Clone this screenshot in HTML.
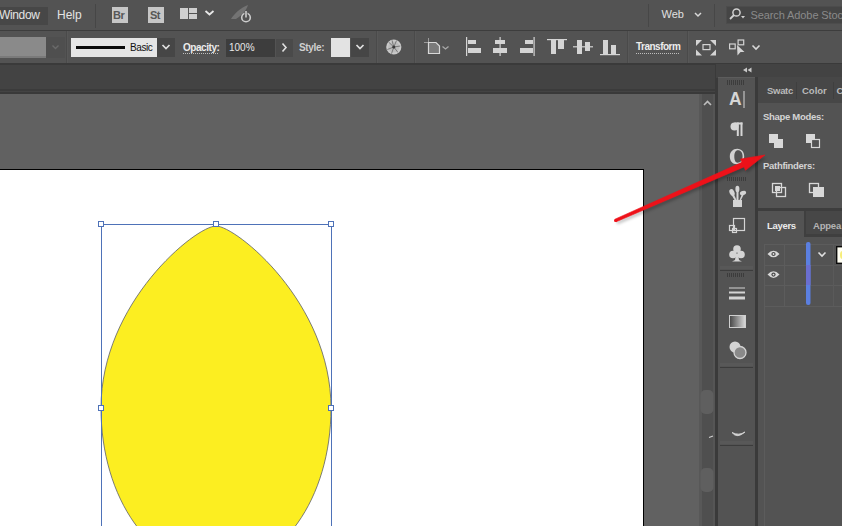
<!DOCTYPE html>
<html><head><meta charset="utf-8">
<style>
*{margin:0;padding:0;box-sizing:border-box}
html,body{width:842px;height:526px;overflow:hidden;background:#535353;font-family:"Liberation Sans",sans-serif;}
.a{position:absolute}
.t{position:absolute;white-space:nowrap;color:#e6e6e6;font-size:12px;line-height:14px}
.b{font-weight:bold;font-size:11px}
.sep{position:absolute;width:1px;background:#464646}
</style></head><body>

<!-- MENU BAR -->
<div class="a" style="left:0;top:0;width:842px;height:30px;background:#535353"></div>
<div class="a" style="left:0;top:30px;width:842px;height:1px;background:#3d3d3d"></div>
<div class="a" style="left:0;top:7px;width:48px;height:18px;background:#474747"></div>
<div class="t" style="left:-1px;top:7.5px;font-size:12px;letter-spacing:-0.35px;color:#e4e4e4">Window</div>
<div class="t" style="left:57px;top:7.5px;font-size:12px;color:#e4e4e4">Help</div>
<div class="sep" style="left:95px;top:4px;height:24px"></div>
<div class="a" style="left:112px;top:7px;width:16px;height:16px;background:#c6c6c6"></div>
<div class="t" style="left:113px;top:8px;font-size:11px;font-weight:bold;color:#575757;letter-spacing:-0.5px">Br</div>
<div class="a" style="left:148px;top:7px;width:16px;height:16px;background:#c6c6c6"></div>
<div class="t" style="left:150px;top:8px;font-size:11px;font-weight:bold;color:#575757;letter-spacing:-0.5px">St</div>

<svg class="a" style="left:0;top:0" width="842" height="31" viewBox="0 0 842 31">
  <rect x="180" y="8" width="8" height="11" fill="#cfcfcf"/>
  <rect x="189" y="8" width="8" height="5" fill="#cfcfcf"/>
  <rect x="189" y="14" width="8" height="5" fill="#cfcfcf"/>
  <path d="M205.5,11 L209.5,14.5 L213.5,11" fill="none" stroke="#e8e8e8" stroke-width="1.8"/>
  <path d="M231,19 C234,14 240,8 248,5 C246,11 242,15 236,19 Z" fill="#7c7c7c" opacity="0.8"/>
  <circle cx="246" cy="17.5" r="4.3" fill="none" stroke="#cdcdcd" stroke-width="1.6"/>
  <rect x="244.5" y="12" width="3" height="5" fill="#535353"/>
  <rect x="245.2" y="11" width="1.6" height="6.5" fill="#cdcdcd"/>
  <rect x="648" y="4" width="1" height="23" fill="#474747"/>
  <path d="M695,13 L698,16 L701,13" fill="none" stroke="#d8d8d8" stroke-width="1.5"/>
  <rect x="714" y="4" width="1" height="23" fill="#474747"/>
  <rect x="726.5" y="6.5" width="120" height="17" fill="#454545" stroke="#4c4c4c" stroke-width="1"/>
  <circle cx="736.5" cy="12.5" r="3.6" fill="none" stroke="#d0d0d0" stroke-width="1.5"/>
  <path d="M734,15 L730,19" stroke="#d0d0d0" stroke-width="1.8"/>
  <path d="M741,16 L745,16 L743,18.5 Z" fill="#d0d0d0"/>
</svg>
<div class="t" style="left:661.5px;top:7.2px;font-size:11px;color:#e0e0e0">Web</div>
<div class="t" style="left:750.5px;top:7.5px;font-size:11px;letter-spacing:-0.1px;color:#8a8a8a">Search Adobe Stock</div>

<!-- CONTROL BAR -->
<div class="a" style="left:0;top:31px;width:842px;height:32px;background:#535353"></div>
<div class="a" style="left:0;top:63px;width:842px;height:1px;background:#3b3b3b"></div>

<svg class="a" style="left:0;top:31px" width="842" height="32" viewBox="0 31 842 32">
  <rect x="0" y="37" width="46" height="21" fill="#8a8a8a"/>
  <rect x="0" y="56" width="46" height="2" fill="#7a7a7a"/>
  <rect x="46" y="37" width="19" height="21" fill="#4f4f4f"/>
  <path d="M52.5,45.5 L55.5,48.5 L58.5,45.5" fill="none" stroke="#6a6a6a" stroke-width="1.4"/>
  <rect x="66" y="31" width="1" height="32" fill="#4a4a4a"/><rect x="67" y="31" width="1" height="32" fill="#585858"/>
  <rect x="71" y="38" width="86" height="19" fill="#e5e5e5"/>
  <rect x="76" y="46" width="49" height="3" fill="#0a0a0a"/>
  <rect x="157" y="38" width="18" height="19" fill="#464646"/>
  <path d="M162.5,45 L166,48.5 L169.5,45" fill="none" stroke="#e0e0e0" stroke-width="1.7"/>
  <line x1="183" y1="53.5" x2="219" y2="53.5" stroke="#bdbdbd" stroke-width="1" stroke-dasharray="1,1"/>
  <rect x="226" y="39" width="49" height="18" fill="#3d3d3d"/>
  <rect x="276" y="39" width="17" height="18" fill="#4a4a4a"/>
  <path d="M282.5,43.5 L286,47.5 L282.5,51.5" fill="none" stroke="#e0e0e0" stroke-width="1.6"/>
  <rect x="331" y="38" width="19" height="19" fill="#e3e3e3"/>
  <rect x="351" y="38" width="18" height="19" fill="#464646"/>
  <path d="M356.5,45 L360,48.5 L363.5,45" fill="none" stroke="#e0e0e0" stroke-width="1.7"/>
  <rect x="376" y="31" width="1" height="32" fill="#4a4a4a"/><rect x="377" y="31" width="1" height="32" fill="#585858"/>
  <circle cx="393.8" cy="47" r="7.6" fill="#cacaca"/>
  <circle cx="393.8" cy="47" r="5.6" fill="#bdbdbd"/>
  <g stroke="#7a7a7a" stroke-width="1">
   <line x1="393.8" y1="47" x2="396.5" y2="40.5"/><line x1="393.8" y1="47" x2="400.3" y2="46"/>
   <line x1="393.8" y1="47" x2="398" y2="52.5"/><line x1="393.8" y1="47" x2="391.5" y2="53.7"/>
   <line x1="393.8" y1="47" x2="387.3" y2="49.5"/><line x1="393.8" y1="47" x2="388.5" y2="42"/>
   <line x1="393.8" y1="47" x2="392" y2="40.3"/>
  </g>
  <circle cx="393.8" cy="47" r="1.6" fill="#3a3a3a"/>
  <rect x="414" y="31" width="1" height="32" fill="#4a4a4a"/><rect x="415" y="31" width="1" height="32" fill="#585858"/>
  <path d="M428.5,42.5 L436,42.5 L439.5,46 L439.5,53.5 L428.5,53.5 Z" fill="#7a7a7a" stroke="#d8d8d8" stroke-width="1.2"/>
  <line x1="428.5" y1="38" x2="428.5" y2="42" stroke="#9a9a9a" stroke-width="1"/>
  <line x1="424" y1="42.5" x2="428" y2="42.5" stroke="#9a9a9a" stroke-width="1"/>
  <path d="M442.5,46.5 L445.5,49 L448.5,46.5" fill="none" stroke="#a8a8a8" stroke-width="1.3"/>
  <g fill="#d4d4d4">
   <rect x="466" y="37" width="1.2" height="19"/>
   <rect x="468" y="40" width="8" height="4"/><rect x="468" y="48" width="13" height="5"/>
   <rect x="499.5" y="37" width="1.2" height="19"/>
   <rect x="495" y="40" width="10" height="4"/><rect x="493" y="48" width="14" height="5"/>
   <rect x="533.5" y="37" width="1.2" height="19"/>
   <rect x="525" y="40" width="8" height="4"/><rect x="520" y="48" width="13" height="5"/>
   <rect x="547" y="39" width="20" height="1.2"/>
   <rect x="551" y="40" width="5" height="14"/><rect x="558" y="40" width="6" height="9"/>
   <rect x="573" y="46.2" width="20" height="1.2"/>
   <rect x="577" y="40" width="5" height="14"/><rect x="585" y="42" width="5" height="9"/>
   <rect x="600" y="54" width="20" height="1.2"/>
   <rect x="603" y="40" width="5" height="14"/><rect x="611" y="45" width="5" height="9"/>
  </g>
  <rect x="627" y="31" width="1" height="32" fill="#4a4a4a"/><rect x="628" y="31" width="1" height="32" fill="#585858"/>
  <line x1="636" y1="53.5" x2="680" y2="53.5" stroke="#bdbdbd" stroke-width="1" stroke-dasharray="1,1"/>
  <rect x="687" y="31" width="1" height="32" fill="#4a4a4a"/><rect x="688" y="31" width="1" height="32" fill="#585858"/>
  <g fill="#d4d4d4">
   <path d="M696,40 L702,40 L696,46 Z"/><path d="M716,40 L710,40 L716,46 Z"/>
   <path d="M696,55.5 L702,55.5 L696,49.5 Z"/><path d="M716,55.5 L710,55.5 L716,49.5 Z"/>
   <path d="M737,45 L744.5,52 L740.5,52 L737.5,55.5 Z"/>
  </g>
  <g fill="none" stroke="#d4d4d4" stroke-width="1.2">
   <rect x="703" y="44.6" width="7" height="5"/>
   <rect x="729.6" y="44" width="5.6" height="4.8"/>
   <rect x="738.1" y="40" width="5.6" height="4.8"/>
  </g>
  <path d="M752.5,45.5 L756,49 L759.5,45.5" fill="none" stroke="#d8d8d8" stroke-width="1.6"/>
</svg>
<div class="t" style="left:130px;top:41.2px;font-size:10px;letter-spacing:-0.4px;color:#111">Basic</div>
<div class="t" style="left:183px;top:40.5px;font-size:10px;font-weight:bold;letter-spacing:-0.45px;color:#ececec">Opacity:</div>
<div class="t" style="left:229px;top:40.5px;font-size:10px;color:#e8e8e8">100%</div>
<div class="t" style="left:299px;top:40.5px;font-size:10px;font-weight:bold;letter-spacing:-0.35px;color:#cfcfcf">Style:</div>
<div class="t" style="left:636px;top:40.3px;font-size:10px;font-weight:bold;letter-spacing:-0.5px;color:#ececec">Transform</div>

<!-- DOC STRIP -->
<div class="a" style="left:0;top:64px;width:716px;height:30px;background:#434343"></div>
<div class="a" style="left:0;top:63px;width:842px;height:2px;background:#3a3a3a"></div>
<div class="a" style="left:0;top:89px;width:716px;height:2px;background:#3b3b3b"></div>
<div class="a" style="left:0;top:92px;width:716px;height:2px;background:#393939"></div>

<!-- CANVAS -->
<div class="a" style="left:0;top:94px;width:700px;height:432px;background:#616161"></div>
<svg class="a" style="left:0;top:0" width="700" height="526" viewBox="0 0 700 526">
  <rect x="-1" y="169.5" width="644.5" height="400" fill="#fff" stroke="#000" stroke-width="1"/>
  <path d="M216,226 C236,226 331,302.4 331,408 C331,498.7 280.4,570 216,570 C151.6,570 101,498.7 101,408 C101,302.4 196,226 216,226 Z" fill="#fcee21" stroke="#5c5e6a" stroke-width="0.8"/>
  <rect x="101.5" y="224.5" width="230" height="400" fill="none" stroke="#4e72b8" stroke-width="1"/>
  <rect x="98.5" y="221.5" width="5" height="5" fill="#fff" stroke="#4e72b8" stroke-width="1"/>
  <rect x="213.5" y="221.5" width="5" height="5" fill="#fff" stroke="#4e72b8" stroke-width="1"/>
  <rect x="328.5" y="221.5" width="5" height="5" fill="#fff" stroke="#4e72b8" stroke-width="1"/>
  <rect x="98.5" y="405.5" width="5" height="5" fill="#fff" stroke="#4e72b8" stroke-width="1"/>
  <rect x="328.5" y="405.5" width="5" height="5" fill="#fff" stroke="#4e72b8" stroke-width="1"/>
</svg>

<!-- SCROLLBAR -->
<div class="a" style="left:699px;top:94px;width:3px;height:432px;background:#585858"></div>
<div class="a" style="left:702px;top:94px;width:11px;height:432px;background:#4f4f4f"></div>
<div class="a" style="left:713px;top:94px;width:2px;height:432px;background:#555555"></div>
<div class="a" style="left:715px;top:64px;width:3px;height:462px;background:#3a3a3a"></div>

<!-- RIGHT DOCK -->
<div class="a" style="left:716px;top:64px;width:126px;height:14px;background:#434343"></div>
<div class="a" style="left:718px;top:77px;width:37px;height:449px;background:#535353"></div>
<div class="a" style="left:718px;top:77px;width:37px;height:1px;background:#5c5c5c"></div>
<div class="a" style="left:755px;top:77px;width:3px;height:449px;background:#3a3a3a"></div>
<div class="a" style="left:758px;top:77px;width:84px;height:26px;background:#474747"></div>
<div class="a" style="left:758px;top:103px;width:84px;height:104px;background:#535353"></div>
<div class="a" style="left:758px;top:208px;width:84px;height:3px;background:#3d3d3d"></div>
<div class="a" style="left:758px;top:211px;width:84px;height:26px;background:#474747"></div>
<div class="a" style="left:758px;top:211px;width:46px;height:26px;background:#535353"></div>
<div class="a" style="left:758px;top:237px;width:84px;height:289px;background:#535353"></div>
<svg class="a" style="left:700px;top:64px" width="142" height="462" viewBox="700 64 142 462">
  <path d="M743,70 L747,67.5 L747,72.5 Z M747.5,70 L751.5,67.5 L751.5,72.5 Z" fill="#c8c8c8"/>
  <!-- scrollbar -->
  <path d="M704,105 L707.5,101.5 L711,105" fill="none" stroke="#bdbdbd" stroke-width="1.6"/>
  <rect x="700.5" y="390" width="13" height="24" rx="5" fill="#5f5f5f"/>
  <rect x="700.5" y="468" width="13" height="24" rx="5" fill="#5f5f5f"/>
  <path d="M709,437.5 L713,436" stroke="#d0d0d0" stroke-width="1.2"/>
  <!-- grips -->
  <g fill="#3c3c3c">
   <rect x="727" y="80" width="1" height="5"/><rect x="729" y="80" width="1" height="5"/><rect x="731" y="80" width="1" height="5"/><rect x="733" y="80" width="1" height="5"/><rect x="735" y="80" width="1" height="5"/><rect x="737" y="80" width="1" height="5"/><rect x="739" y="80" width="1" height="5"/><rect x="741" y="80" width="1" height="5"/><rect x="743" y="80" width="1" height="5"/>
   <rect x="727" y="177" width="1" height="4"/><rect x="729" y="177" width="1" height="4"/><rect x="731" y="177" width="1" height="4"/><rect x="733" y="177" width="1" height="4"/><rect x="735" y="177" width="1" height="4"/><rect x="737" y="177" width="1" height="4"/><rect x="739" y="177" width="1" height="4"/><rect x="741" y="177" width="1" height="4"/><rect x="743" y="177" width="1" height="4"/><rect x="745" y="177" width="1" height="4"/>
   <rect x="727" y="273" width="1" height="4"/><rect x="729" y="273" width="1" height="4"/><rect x="731" y="273" width="1" height="4"/><rect x="733" y="273" width="1" height="4"/><rect x="735" y="273" width="1" height="4"/><rect x="737" y="273" width="1" height="4"/><rect x="739" y="273" width="1" height="4"/><rect x="741" y="273" width="1" height="4"/><rect x="743" y="273" width="1" height="4"/>
  </g>
  <rect x="720" y="266" width="33" height="3" fill="#585858"/><rect x="720" y="270" width="33" height="1" fill="#3c3c3c"/>
  <rect x="720" y="363" width="33" height="3" fill="#585858"/><rect x="720" y="367" width="33" height="1" fill="#3c3c3c"/>
  <rect x="720" y="441" width="33" height="3" fill="#585858"/><rect x="720" y="445" width="33" height="1" fill="#3c3c3c"/>
  <rect x="743.5" y="91" width="1" height="17" fill="#d8d8d8"/>
  <g fill="#d6d6d6"><circle cx="734.5" cy="126.5" r="4"/><rect x="734.5" y="122.5" width="8" height="2"/><rect x="736.8" y="122.5" width="2" height="13.5"/><rect x="740.5" y="122.5" width="2" height="13.5"/></g>
  <path fill-rule="evenodd" fill="#d2d2d2" d="M737.2,148.8 C742,148.8 744.2,152.5 744.2,156.5 C744.2,161 741,164.2 736.8,164.2 C732.5,164.2 729.8,161 729.8,156.5 C729.8,152 733,148.8 737.2,148.8 Z M738,150.3 C735.5,150.3 734.3,153 734.3,156.5 C734.3,160 735.5,162.7 737.5,162.7 C740.5,162.7 742.6,160 742.6,156.5 C742.6,152.8 740.8,150.3 738,150.3 Z"/>
  <!-- brushes -->
  <g fill="#d4d4d4">
   <rect x="733" y="200" width="9" height="7"/>
   <path d="M734.5,200 L731,194 L733,192.5 L736.5,200 Z"/>
   <path d="M736.5,200 L736.5,191 L738.5,191 L738.5,200 Z"/>
   <path d="M739.5,200 L742,194 L743.5,195 L741,200 Z"/>
   <ellipse cx="732" cy="192.5" rx="2.4" ry="3.6" transform="rotate(-25 732 192.5)"/>
   <ellipse cx="737.4" cy="189" rx="2" ry="3.2"/>
   <ellipse cx="743" cy="193" rx="3.2" ry="2" transform="rotate(-20 743 193)"/>
  </g>
  <!-- artboards -->
  <g fill="none" stroke="#d4d4d4" stroke-width="1.2">
   <rect x="733.5" y="218.5" width="11" height="12"/>
   <rect x="729.5" y="225.5" width="5" height="5"/>
   <rect x="732.5" y="228.5" width="4" height="4"/>
  </g>
  <!-- club -->
  <g fill="#d4d4d4">
   <circle cx="737" cy="249" r="3.8"/><circle cx="733" cy="254.5" r="3.8"/><circle cx="741" cy="254.5" r="3.8"/>
   <path d="M736,254 L738,254 L739,260 L742,261.5 L732,261.5 L735,260 Z"/>
  </g>
  <!-- stroke -->
  <g fill="#d4d4d4">
   <rect x="729" y="287.5" width="16" height="1"/>
   <rect x="729" y="291.5" width="16" height="2"/>
   <rect x="729" y="296.5" width="16" height="3"/>
  </g>
  <!-- gradient -->
  <defs><linearGradient id="gr" x1="0" x2="1"><stop offset="0" stop-color="#444"/><stop offset="1" stop-color="#ddd"/></linearGradient></defs>
  <rect x="729.5" y="315.5" width="16" height="12" fill="url(#gr)" stroke="#cfcfcf" stroke-width="1"/>
  <!-- transparency -->
  <circle cx="735" cy="347" r="5.5" fill="#d4d4d4"/>
  <circle cx="740" cy="352.5" r="6" fill="#8a8a8a" stroke="#d4d4d4" stroke-width="1.3"/>
  <!-- smile -->
  <path d="M732,432.5 Q737,439 745,432 Q739,436 732,432.5 Z" fill="#d4d4d4" stroke="#d4d4d4" stroke-width="0.9"/>
  <!-- shape modes icons -->
  <g fill="#d8d8d8">
   <rect x="769" y="134" width="9" height="9"/><rect x="774" y="139" width="9" height="9"/>
   <rect x="806" y="134" width="9" height="9"/>
  </g>
  <rect x="811.5" y="139.5" width="8" height="8" fill="#535353" stroke="#d8d8d8" stroke-width="1.2"/>
  <g fill="none" stroke="#d8d8d8" stroke-width="1.3">
   <rect x="772.5" y="183.5" width="9" height="9"/><rect x="776.5" y="187.5" width="9" height="9"/>
  </g>
  <rect x="775" y="186" width="5" height="5" fill="#d8d8d8"/>
  <rect x="809.5" y="183.5" width="9" height="9" fill="none" stroke="#d8d8d8" stroke-width="1.3"/>
  <rect x="813" y="187" width="11" height="10" fill="#d8d8d8"/>
  <!-- tab separators -->
  <rect x="796" y="82" width="1" height="17" fill="#3f3f3f"/>
  <rect x="833" y="82" width="1" height="17" fill="#3f3f3f"/>
  <rect x="804" y="211" width="2" height="26" fill="#3f3f3f"/><rect x="806" y="234" width="36" height="3" fill="#3f3f3f"/>
  <!-- layers grid -->
  <g fill="#5c5c5c">
   <rect x="764" y="244" width="78" height="1"/>
   <rect x="764" y="265" width="78" height="1"/>
   <rect x="764" y="285" width="78" height="1"/>
   <rect x="764" y="306" width="78" height="1"/>
   <rect x="764" y="244" width="1" height="282"/>
   <rect x="784" y="244" width="1" height="62"/>
  </g>
  <rect x="806" y="242" width="4.5" height="63" rx="2" fill="#5b7fe0"/>
  <rect x="806" y="265" width="4.5" height="20" fill="#6a6ed0"/>
  <g fill="#d8d8d8">
   <path d="M767.5,254 Q773.5,247.3 779.5,254 Q773.5,260.7 767.5,254 Z"/>
   <path d="M767.5,274.6 Q773.5,267.9 779.5,274.6 Q773.5,281.3 767.5,274.6 Z"/>
  </g>
  <circle cx="773.5" cy="254" r="2.1" fill="#4a4a4a"/><circle cx="773.5" cy="274.6" r="2.1" fill="#4a4a4a"/><circle cx="773.5" cy="254" r="0.9" fill="#e0e0e0"/><circle cx="773.5" cy="274.6" r="0.9" fill="#e0e0e0"/>
  <path d="M818.5,252.5 L822,256 L825.5,252.5" fill="none" stroke="#e0e0e0" stroke-width="1.6"/>
  <rect x="836.7" y="246.7" width="10" height="16.6" fill="#fffef2" stroke="#0a0a0a" stroke-width="1.4"/><ellipse cx="842.5" cy="255" rx="2.5" ry="4" fill="#f7ee7a"/>
  <rect x="833" y="244" width="1" height="62" fill="#5a5a5a"/>
</svg>
<div class="t" style="left:729px;top:90px;font-size:17.5px;line-height:18px;font-weight:bold;color:#d6d6d6">A</div>


<div class="t" style="left:767px;top:83.5px;font-size:9.5px;font-weight:bold;color:#bababa;letter-spacing:-0.3px">Swatc</div>
<div class="t" style="left:802px;top:83.5px;font-size:9.5px;font-weight:bold;color:#bababa;letter-spacing:0px">Color</div>
<div class="t" style="left:836.5px;top:83.5px;font-size:9.5px;font-weight:bold;color:#bababa">C</div>
<div class="t" style="left:763px;top:110px;font-size:9.5px;font-weight:bold;color:#d4d4d4;letter-spacing:-0.3px">Shape Modes:</div>
<div class="t" style="left:763px;top:159px;font-size:9.5px;font-weight:bold;color:#d4d4d4;letter-spacing:-0.3px">Pathfinders:</div>
<div class="t" style="left:767px;top:219px;font-size:9.5px;font-weight:bold;color:#ececec;letter-spacing:-0.3px">Layers</div>
<div class="t" style="left:813px;top:219px;font-size:9.5px;font-weight:bold;letter-spacing:-0.2px;color:#b4b4b4">Appea</div>

<svg class="a" style="left:0;top:0" width="842" height="526" viewBox="0 0 842 526">
  <defs><filter id="sh" x="-20%" y="-20%" width="140%" height="140%"><feGaussianBlur stdDeviation="1.5"/></filter></defs>
  <path d="M616.1,221.8 L744.0,166.9 L745.5,170.3 L765.0,155.0 L740.5,159.0 L742.0,162.3 L614.9,219.2 Z" fill="#000" opacity="0.25" transform="translate(1.5,2.5)" filter="url(#sh)"/>
  <path d="M616.1,221.8 L744.0,166.9 L745.5,170.3 L765.0,155.0 L740.5,159.0 L742.0,162.3 L614.9,219.2 Z" fill="#ee1119" stroke="#ee1119" stroke-width="0.6" stroke-linejoin="round"/>
  <circle cx="615.5" cy="220.5" r="1.5" fill="#ee1119"/>
</svg>
</body></html>
